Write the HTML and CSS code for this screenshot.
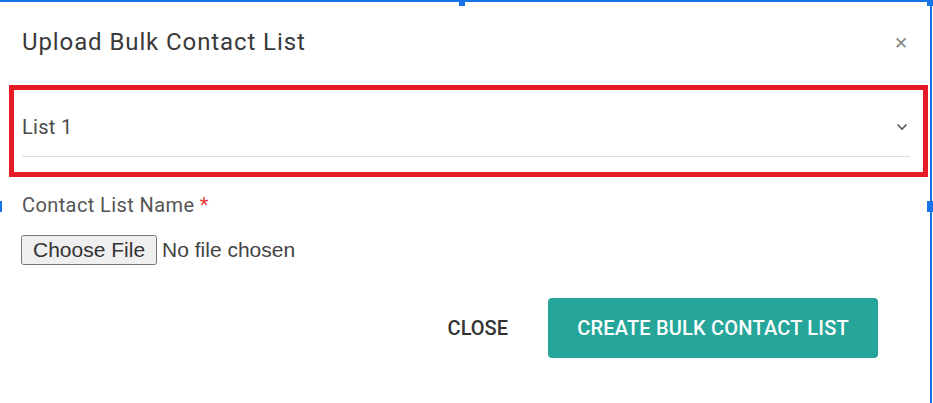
FILE: index.html
```html
<!DOCTYPE html>
<html>
<head>
<meta charset="utf-8">
<link rel="stylesheet" href="styles.css">
</head>
<body>
<div class="dialog">
  <header class="dialog-header">
    <h1 class="dialog-title">Upload Bulk Contact List</h1>
    <span class="dialog-close">&#x2715;</span>
  </header>
  <div class="select-field">
    <span class="select-value">List 1</span>
    <svg class="chevron" width="12" height="8" viewBox="0 0 12 8"><path d="M1.5 1.5 L6 6 L10.5 1.5" fill="none" stroke="#555" stroke-width="1.6"/></svg>
  </div>
  <label class="field-label">Contact List Name <span class="req">*</span></label>
  <input class="file-input" type="file">
  <div class="actions">
    <button class="btn-flat">CLOSE</button>
    <button class="btn-primary">CREATE BULK CONTACT LIST</button>
  </div>
</div>
<div class="highlight"></div>
<div class="sel-top"></div>
<div class="sel-right"></div>
<div class="handle h-top"></div>
<div class="handle h-corner"></div>
<div class="handle h-right"></div>
<div class="handle h-left"></div>
</body>
</html>
```

FILE: styles.css
```css
html, body {
  margin: 0;
  padding: 0;
  background: #fff;
  font-family: Roboto, "Liberation Sans", sans-serif;
}
body { overflow: hidden; height: 403px; }
.dialog {
  width: 888px;
  padding: 0 22px;
  box-sizing: content-box;
}
.dialog-header {
  height: 86px;
  display: flex;
  align-items: center;
  justify-content: space-between;
}
.dialog-title {
  margin: 0;
  font-size: 24px;
  font-weight: 400;
  letter-spacing: 0.9px;
  color: #3a3a3a;
  position: relative;
  top: -1px;
}
.dialog-close {
  font-size: 17px;
  color: #888;
  margin-right: 2px;
}
.select-field {
  box-sizing: border-box;
  height: 71px;
  padding-top: 12px;
  border-bottom: 1px solid #ddd;
  display: flex;
  align-items: center;
  justify-content: space-between;
}
.select-value {
  font-size: 20px;
  letter-spacing: 0.3px;
  color: #4a4a4a;
}
.chevron {
  margin-right: 2px;
}
.field-label {
  display: block;
  margin-top: 36px;
  font-size: 20px;
  letter-spacing: 0.4px;
  color: #555;
}
.req { color: #e53935; }
.file-input {
  display: block;
  margin-top: 18px;
  margin-left: -1px;
  font-size: 21px;
  font-family: "Liberation Sans", Arial, sans-serif;
  color: #444;
}
.file-input::file-selector-button {
  padding: 1px 10px;
  margin-right: 5px;
  font-family: inherit;
  font-size: inherit;
  color: #333;
}
.actions {
  display: flex;
  justify-content: flex-end;
  align-items: center;
  gap: 40px;
  margin-top: 33px;
  padding-right: 32px;
}
.btn-flat {
  background: none;
  border: none;
  font-family: Roboto, sans-serif;
  font-size: 20px;
  font-weight: 500;
  color: #333;
  padding: 0;
}
.btn-primary {
  width: 330px;
  height: 60px;
  background: #26a69a;
  border: none;
  border-radius: 4px;
  color: #fff;
  font-family: Roboto, sans-serif;
  font-size: 20px;
  font-weight: 500;
  letter-spacing: 0.2px;
}
.highlight {
  position: absolute;
  left: 9px;
  top: 85px;
  width: 909px;
  height: 82px;
  border: 5px solid #e51c26;
}
.sel-top {
  position: absolute;
  left: 0;
  top: 0;
  width: 929px;
  height: 2px;
  background: #1a73e8;
}
.sel-right {
  position: absolute;
  left: 930px;
  top: 0;
  width: 2px;
  height: 403px;
  background: #1a73e8;
}
.handle {
  position: absolute;
  width: 6px;
  height: 6px;
  background: #1a73e8;
}
.h-top { left: 459px; top: 0; }
.h-corner { left: 927px; top: 0; }
.h-right { left: 927px; top: 201px; width: 6px; height: 11px; }
.h-left { left: 0; top: 201px; width: 2px; height: 11px; }
```
